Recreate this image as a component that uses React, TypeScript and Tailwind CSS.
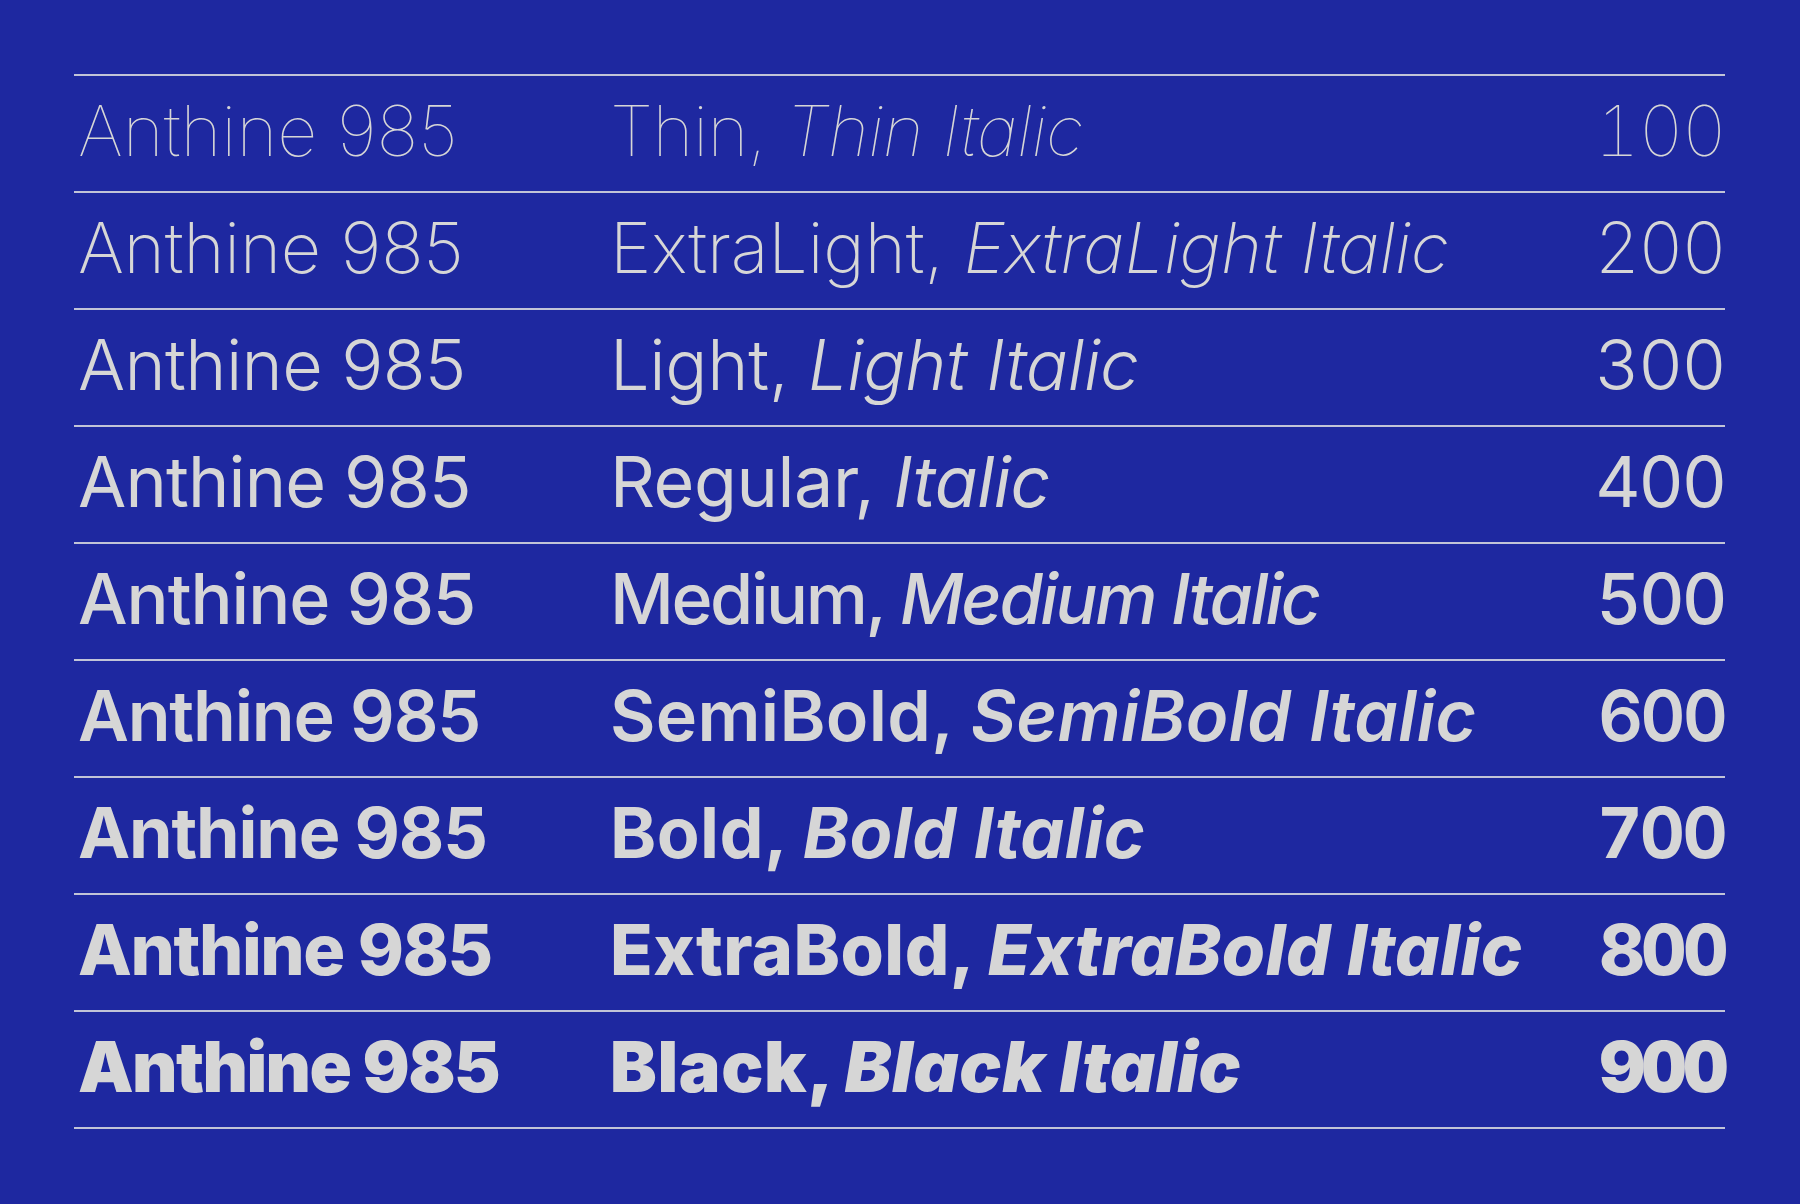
const weights = [
    { w: "font-thin", name: "Thin", italic: "Thin Italic", num: "100", t1: "tracking-[0em]", t2: "tracking-[-0.008em]", t3: "tracking-[-0.026em]" },
    { w: "font-extralight", name: "ExtraLight", italic: "ExtraLight Italic", num: "200", t1: "tracking-[-0.002em]", t2: "tracking-[-0.001em]", t3: "tracking-[-0.026em]" },
    { w: "font-light", name: "Light", italic: "Light Italic", num: "300", t1: "tracking-[-0.009em]", t2: "tracking-[-0.0035em]", t3: "tracking-[-0.026em]" },
    { w: "font-normal", name: "Regular", italic: "Italic", num: "400", t1: "tracking-[-0.012em]", t2: "tracking-[-0.006em]", t3: "tracking-[-0.03em]" },
    { w: "font-medium", name: "Medium", italic: "Medium Italic", num: "500", t1: "tracking-[-0.015em]", t2: "tracking-[-0.035em]", t3: "tracking-[-0.035em]" },
    { w: "font-semibold", name: "SemiBold", italic: "SemiBold Italic", num: "600", t1: "tracking-[-0.017em]", t2: "tracking-[0.004em]", t3: "tracking-[-0.042em]" },
    { w: "font-bold", name: "Bold", italic: "Bold Italic", num: "700", t1: "tracking-[-0.017em]", t2: "tracking-[0.006em]", t3: "tracking-[-0.038em]" },
    { w: "font-extrabold", name: "ExtraBold", italic: "ExtraBold Italic", num: "800", t1: "tracking-[-0.021em]", t2: "tracking-[0.007em]", t3: "tracking-[-0.048em]" },
    { w: "font-black", name: "Black", italic: "Black Italic", num: "900", t1: "tracking-[-0.023em]", t2: "tracking-[0.0095em]", t3: "tracking-[-0.048em]" },
];

export default function App() {
    return (
        <div className="w-[1800px] h-[1204px] bg-[#1e28a0] pl-[74px] pr-[75px] pt-[74px] font-['Inter','Liberation_Sans',sans-serif] text-[#d6d6d6]">
            <div className="border-t-2 border-[#c2c4d8]">
                {weights.map((r) => (
                    <div
                        key={r.num}
                        className={`flex items-end h-[117px] pb-[25px] border-b-2 border-[#c2c4d8] text-[70px] leading-none ${r.w}`}
                    >
                        <div className={`w-[536px] pl-[4px] shrink-0 ${r.t1}`}>Anthine 985</div>
                        <div className={`flex-1 ${r.t2}`}>
                            {r.name}, <span className="italic">{r.italic}</span>
                        </div>
                        <div className={`tabular-nums ${r.t3}`}>{r.num}</div>
                    </div>
                ))}
            </div>
        </div>
    );
}
